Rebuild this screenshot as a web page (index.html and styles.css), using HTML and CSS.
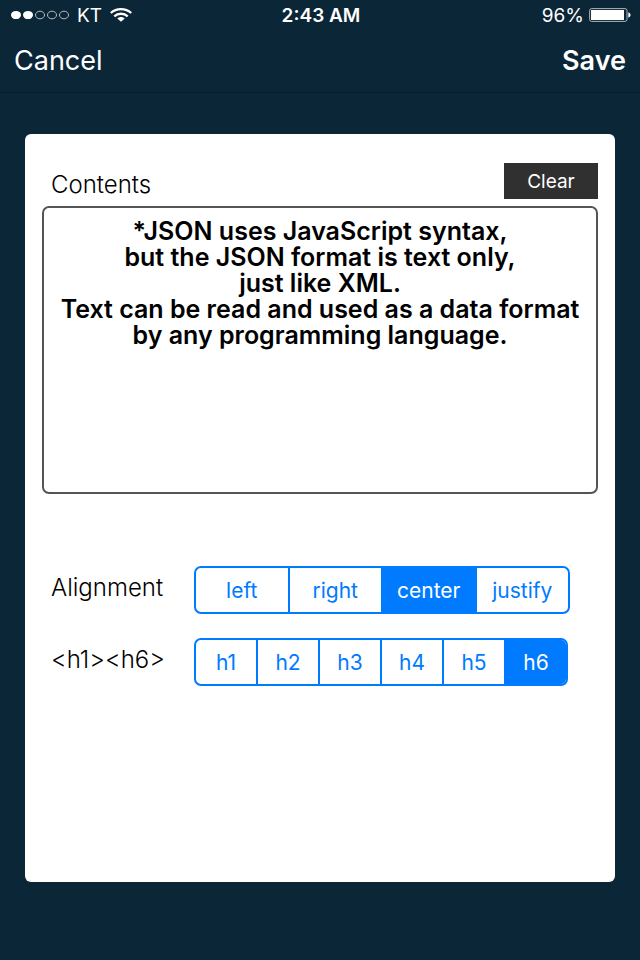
FILE: index.html
```html
<!DOCTYPE html>
<html lang="en">
<head>
<meta charset="utf-8">
<meta name="viewport" content="width=device-width, initial-scale=1">
<title>Contents</title>
<link rel="stylesheet" href="styles.css">
</head>
<body>
<header class="top">
  <div class="status">
    <div class="status-left">
      <svg class="signal" width="58" height="10" viewBox="0 0 58 10" aria-hidden="true">
        <g fill="#fff"><ellipse cx="5" cy="5" rx="5" ry="4.1"/><ellipse cx="17" cy="5" rx="5" ry="4.1"/></g>
        <g fill="none" stroke="#b5bec4" stroke-width="1"><ellipse cx="29" cy="5" rx="4.5" ry="3.8"/><ellipse cx="41" cy="5" rx="4.5" ry="3.8"/><ellipse cx="53" cy="5" rx="4.5" ry="3.8"/></g>
      </svg>
      <span>KT</span>
      <svg class="wifi" width="22" height="14" viewBox="0 0 22 14" aria-hidden="true">
        <g fill="none" stroke="#fff" stroke-width="2.3"><path d="M.8 5C6.500 -.1 15.500 -.1 21.200 5"/><path d="M4.300 8.300C8 4.900 14 4.900 17.700 8.300"/></g>
        <path fill="#fff" d="M7.300 10.600C9.500 8.600 12.500 8.600 14.700 10.600L11 13.800Z"/>
      </svg>
    </div>
    <time class="clock">2:43 AM</time>
    <div class="status-right">
      <span>96%</span>
      <svg width="42" height="14" viewBox="0 0 42 14" aria-hidden="true">
        <rect x=".6" y=".6" width="37.400" height="12.800" rx="2" fill="none" stroke="#aab4ba"/>
        <rect x="2" y="2" width="33" height="10" fill="#fff"/>
        <path fill="#fff" d="M39.300 4.500C42.300 5 42.300 9 39.300 9.500Z"/>
      </svg>
    </div>
  </div>
  <nav class="bar">
    <button type="button" class="nav-button">Cancel</button>
    <button type="submit" form="editor" class="nav-button save">Save</button>
  </nav>
</header>
<main class="page">
  <form class="card" id="editor">
    <div class="card-head">
      <label class="caption" for="contents">Contents</label>
      <button type="button" class="clear">Clear</button>
    </div>
    <textarea class="contents" id="contents" spellcheck="false">*JSON uses JavaScript syntax,
but the JSON format is text only,
just like XML.
Text can be read and used as a data format
by any programming language.</textarea>
    <div class="options">
      <div class="option" role="radiogroup" aria-labelledby="align-label">
        <span class="caption" id="align-label">Alignment</span>
        <div class="segments">
          <label class="segment"><input type="radio" name="align"><span>left</span></label>
          <label class="segment"><input type="radio" name="align"><span>right</span></label>
          <label class="segment"><input type="radio" name="align" checked><span>center</span></label>
          <label class="segment"><input type="radio" name="align"><span>justify</span></label>
        </div>
      </div>
      <div class="option levels" role="radiogroup" aria-labelledby="level-label">
        <span class="caption" id="level-label">&lt;h1&gt;&lt;h6&gt;</span>
        <div class="segments">
          <label class="segment"><input type="radio" name="level"><span>h1</span></label>
          <label class="segment"><input type="radio" name="level"><span>h2</span></label>
          <label class="segment"><input type="radio" name="level"><span>h3</span></label>
          <label class="segment"><input type="radio" name="level"><span>h4</span></label>
          <label class="segment"><input type="radio" name="level"><span>h5</span></label>
          <label class="segment"><input type="radio" name="level" checked><span>h6</span></label>
        </div>
      </div>
    </div>
  </form>
</main>
</body>
</html>
```
FILE: styles.css
```css
* {
  box-sizing: border-box;
}

body {
  margin: 0;
  min-height: 100vh;
  display: flex;
  flex-direction: column;
  background: #0b2637;
  font-family: Inter, "Liberation Sans", sans-serif;
  color: #000;
}

button,
textarea {
  font: inherit;
  margin: 0;
}

.top {
  color: #fff;
  border-bottom: 1px solid #081b28;
}

.status {
  display: grid;
  grid-template-columns: 1fr auto 1fr;
  align-items: center;
  height: 30px;
  padding: 0 9px 0 11px;
  font-size: 19px;
}

.status-left,
.status-right {
  display: flex;
  align-items: center;
  gap: 8px;
}

.status-right {
  justify-content: flex-end;
  gap: 5px;
}

.clock {
  font-weight: 600;
}

.bar {
  display: flex;
  justify-content: space-between;
  align-items: center;
  height: 62px;
  padding: 0 14px;
}

.nav-button {
  padding: 0;
  border: 0;
  background: none;
  color: inherit;
  font-size: 27px;
  line-height: 62px;
}

.save {
  font-weight: 600;
}

.page {
  flex: 1;
  display: flex;
  padding: 41px 25px 78px;
}

.card {
  flex: 1;
  min-width: 0;
  padding: 29px 17px;
  border-radius: 6px;
  background: #fff;
}

.card-head {
  display: flex;
  justify-content: space-between;
  padding-left: 9px;
}

.caption {
  font-size: 24px;
  font-weight: 300;
  line-height: 43px;
}

.clear {
  width: 94px;
  height: 36px;
  padding: 0;
  border: 0;
  background: #303030;
  color: #fff;
  font-size: 19px;
}

.contents {
  display: block;
  width: 100%;
  height: 288px;
  padding: 10px 8px;
  border: 2px solid #555;
  border-radius: 7px;
  background: #fff;
  color: #000;
  font-size: 25px;
  font-weight: 600;
  line-height: 26px;
  text-align: center;
  resize: none;
}

.options {
  display: grid;
  gap: 24px;
  margin-top: 72px;
  padding: 0 28px 0 9px;
}

.option {
  display: grid;
  grid-template-columns: 143px 1fr;
}

.levels {
  padding-right: 2px;
}

.segments {
  display: flex;
  height: 48px;
  overflow: hidden;
  border: 2px solid #007aff;
  border-radius: 7px;
}

.segment {
  position: relative;
  flex: 1 1 0;
  display: flex;
  align-items: center;
  justify-content: center;
  color: #007aff;
  font-size: 21px;
}

.segment + .segment {
  border-left: 2px solid #007aff;
}

.segment input {
  position: absolute;
  inset: 0;
  margin: 0;
  opacity: 0;
}

.segment:has(:checked) {
  background: #007aff;
  color: #fff;
}
```
